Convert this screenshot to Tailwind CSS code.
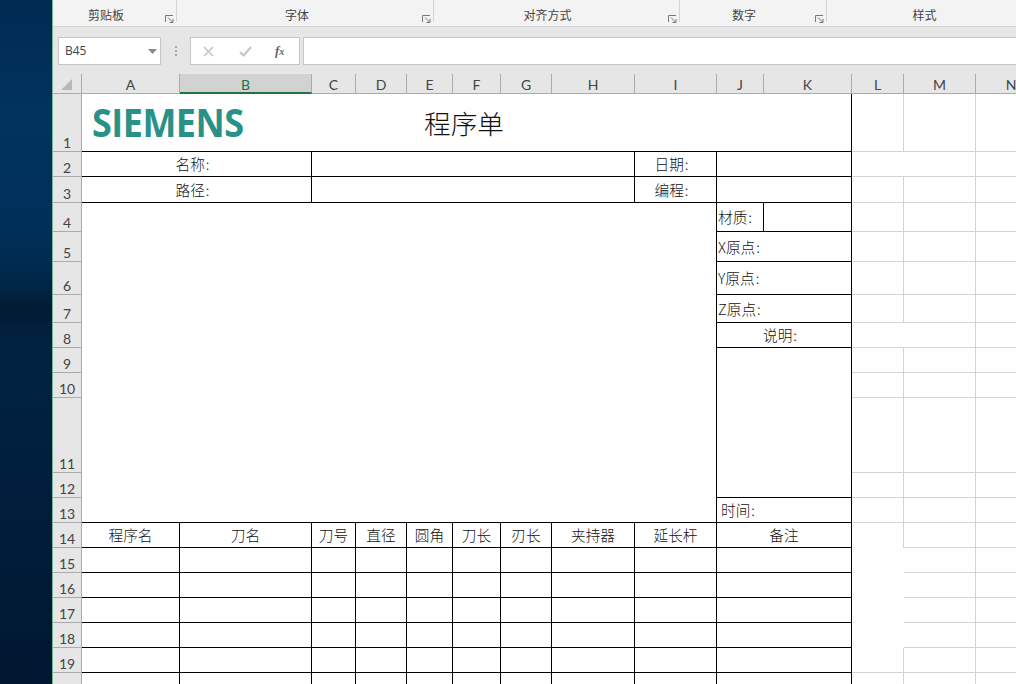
<!DOCTYPE html>
<html lang="zh-CN">
<head>
  <meta charset="UTF-8" />
  <title>程序单</title>
  <script src="https://cdn.jsdelivr.net/npm/@tailwindcss/browser@4"></script>
</head>
<body class="overflow-hidden bg-white">
<div class="flex h-[684px] w-[1016px] overflow-hidden">

  <!-- desktop wallpaper showing behind the window -->
  <div class="w-[53px] shrink-0 border-r border-[#6db595] bg-[linear-gradient(180deg,#002a52_0px,#00335f_110px,#002f5a_230px,#012747_285px,#021a33_310px,#012342_345px,#001f3f_450px,#001a36_600px,#001730_684px)]"></div>

  <div class="flex min-w-0 flex-1 flex-col bg-[#e6e6e6]">
    <!-- ribbon group labels -->
    <div class="flex h-[27px] shrink-0 border-b border-[#d4d4d4] bg-[#f3f3f3] pb-[4px] font-['Noto_Sans_CJK_SC',sans-serif] text-[12px] leading-[17px] text-[#444]">
      <div class="flex w-[124px] border-r border-[#d4d4d4] pt-[6px]">
        <span class="flex-1 pr-[6px] text-center">剪贴板</span>
        <svg class="mr-[2px] mt-[9px] h-[8px] w-[9px]" viewBox="0 0 9 8" fill="none" stroke="#777"><path d="M0.5 7V0.5H8" /><path d="M3 2.5L7.5 7M8 4V7.5H4.5" /></svg>
      </div>
      <div class="flex w-[257px] border-r border-[#d4d4d4] pt-[6px]">
        <span class="flex-1 pr-[5px] text-center">字体</span>
        <svg class="mr-[2px] mt-[9px] h-[8px] w-[9px]" viewBox="0 0 9 8" fill="none" stroke="#777"><path d="M0.5 7V0.5H8" /><path d="M3 2.5L7.5 7M8 4V7.5H4.5" /></svg>
      </div>
      <div class="flex w-[246px] border-r border-[#d4d4d4] pt-[6px]">
        <span class="flex-1 pr-[7px] text-center">对齐方式</span>
        <svg class="mr-[2px] mt-[9px] h-[8px] w-[9px]" viewBox="0 0 9 8" fill="none" stroke="#777"><path d="M0.5 7V0.5H8" /><path d="M3 2.5L7.5 7M8 4V7.5H4.5" /></svg>
      </div>
      <div class="flex w-[147px] border-r border-[#d4d4d4] pt-[6px]">
        <span class="flex-1 pr-[7px] text-center">数字</span>
        <svg class="mr-[2px] mt-[9px] h-[8px] w-[9px]" viewBox="0 0 9 8" fill="none" stroke="#777"><path d="M0.5 7V0.5H8" /><path d="M3 2.5L7.5 7M8 4V7.5H4.5" /></svg>
      </div>
      <div class="flex-1 pl-[6px] pt-[6px] text-center">样式</div>
    </div>

    <!-- formula bar -->
    <div class="flex h-[38px] shrink-0 items-start pt-[10px]">
      <div class="ml-[5px] flex h-[28px] w-[103px] items-center justify-between border border-[#c6c6c6] bg-white pl-[6px] pr-[3px] font-['Open_Sans',sans-serif] text-[12px] text-[#444]">
        <span>B45</span>
        <svg class="h-[5px] w-[9px]" viewBox="0 0 9 5" fill="#8a8a8a"><path d="M0 0H9L4.5 5Z" /></svg>
      </div>
      <div class="flex h-[28px] w-[29px] flex-col items-center justify-center gap-[2px]">
        <span class="h-[2px] w-[2px] bg-[#a8a8a8]"></span>
        <span class="h-[2px] w-[2px] bg-[#a8a8a8]"></span>
        <span class="h-[2px] w-[2px] bg-[#a8a8a8]"></span>
      </div>
      <div class="flex h-[28px] w-[110px] items-center border border-[#c6c6c6] bg-white">
        <svg class="ml-[12px] h-[11px] w-[11px]" viewBox="0 0 11 11" fill="none" stroke="#c4c4c4" stroke-width="1.6"><path d="M1 1L10 10M10 1L1 10" /></svg>
        <svg class="ml-[25px] h-[11px] w-[13px]" viewBox="0 0 13 11" fill="none" stroke="#c4c4c4" stroke-width="2"><path d="M1 6L4.5 9.5L12 1" /></svg>
        <span class="ml-[23px] font-['Liberation_Serif',serif] text-[13px] font-bold italic text-[#666]">f<span class="text-[10px]">x</span></span>
      </div>
      <div class="ml-[3px] h-[28px] flex-1 border-y border-l border-[#c6c6c6] bg-white"></div>
    </div>

    <!-- sheet: row headers, column headers and cells share one grid -->
    <div id="sheet" class="mt-[9px] grid flex-1 grid-cols-[29px_98px_132px_44px_51px_46px_48px_51px_83px_82px_47px_88px_52px_72px_71px] grid-rows-[20px_58px_25px_26px_29px_30px_33px_28px_25px_25px_25px_75px_25px_25px_25px_25px_25px_25px_25px_25px_25px] overflow-hidden font-['Noto_Sans_CJK_SC',sans-serif] text-[14.67px] font-light text-[#111]">
      <!-- column headers -->
      <div class="flex items-center justify-center border-r border-b border-[#ababab]">
        <svg class="ml-[-1px] mt-[1px] h-[11px] w-[11px]" viewBox="0 0 11 11" fill="#b8b8b8"><path d="M11 0V11H0Z" /></svg>
      </div>
      <div class="border-r border-b border-[#ababab] text-center font-['Lato',sans-serif] text-[14px] font-normal leading-[21px] text-[#444]">A</div>
      <div class="border-r border-b-2 border-r-[#ababab] border-b-[#217346] bg-[#d2d2d2] text-center font-['Lato',sans-serif] text-[14px] font-normal leading-[21px] text-[#217346]">B</div>
      <div class="border-r border-b border-[#ababab] text-center font-['Lato',sans-serif] text-[14px] font-normal leading-[21px] text-[#444]">C</div>
      <div class="border-r border-b border-[#ababab] text-center font-['Lato',sans-serif] text-[14px] font-normal leading-[21px] text-[#444]">D</div>
      <div class="border-r border-b border-[#ababab] text-center font-['Lato',sans-serif] text-[14px] font-normal leading-[21px] text-[#444]">E</div>
      <div class="border-r border-b border-[#ababab] text-center font-['Lato',sans-serif] text-[14px] font-normal leading-[21px] text-[#444]">F</div>
      <div class="border-r border-b border-[#ababab] text-center font-['Lato',sans-serif] text-[14px] font-normal leading-[21px] text-[#444]">G</div>
      <div class="border-r border-b border-[#ababab] text-center font-['Lato',sans-serif] text-[14px] font-normal leading-[21px] text-[#444]">H</div>
      <div class="border-r border-b border-[#ababab] text-center font-['Lato',sans-serif] text-[14px] font-normal leading-[21px] text-[#444]">I</div>
      <div class="border-r border-b border-[#ababab] text-center font-['Lato',sans-serif] text-[14px] font-normal leading-[21px] text-[#444]">J</div>
      <div class="border-r border-b border-[#ababab] text-center font-['Lato',sans-serif] text-[14px] font-normal leading-[21px] text-[#444]">K</div>
      <div class="border-r border-b border-[#ababab] text-center font-['Lato',sans-serif] text-[14px] font-normal leading-[21px] text-[#444]">L</div>
      <div class="border-r border-b border-[#ababab] text-center font-['Lato',sans-serif] text-[14px] font-normal leading-[21px] text-[#444]">M</div>
      <div class="border-r border-b border-[#ababab] text-center font-['Lato',sans-serif] text-[14px] font-normal leading-[21px] text-[#444]">N</div>
    </div>
  </div>
</div>

<script>
  const sheet = document.getElementById('sheet');

  const black = 'bg-white border-r border-b border-black';
  const gray = 'bg-white border-r border-b border-[#d4d4d4]';
  const center = ' flex items-center justify-center';
  const left = ' flex items-center';

  function cell(cls, text) {
    const d = document.createElement('div');
    d.className = cls;
    if (text) d.textContent = text;
    sheet.appendChild(d);
    return d;
  }

  // label whose colon sits a little apart, as in the sheet's font
  function label(cls, text) {
    const d = cell(cls);
    const s = document.createElement('span');
    s.textContent = text;
    const c = document.createElement('span');
    c.className = 'ml-[1px]';
    c.textContent = ':';
    d.append(s, c);
    return d;
  }

  function rowHead(n) {
    cell('flex items-end justify-center border-r border-b border-[#ababab] font-[\'Lato\',sans-serif] text-[14px] font-normal leading-[16px] text-[#444]', n < 20 ? String(n) : '');
  }

  // L, M, N on the top rows; merged = L:M joined
  function grayCells(merged) {
    if (merged) {
      cell(gray + ' col-span-2');
    } else {
      cell(gray);
      cell(gray);
    }
    cell(gray);
  }

  // row 1
  rowHead(1);
  const title = cell(black + ' relative col-span-11 flex items-center justify-center pr-[5px] text-[26.67px]', '程序单');
  const logo = document.createElement('span');
  logo.className = "absolute left-[10px] top-[7px] origin-top scale-y-[1.1] font-['Open_Sans',sans-serif] text-[36px] leading-[40px] font-bold tracking-[-0.5px] text-[#2a9189]";
  logo.textContent = 'SIEMENS';
  title.appendChild(logo);
  grayCells(false);

  // rows 2, 3
  rowHead(2);
  label(black + center + ' col-span-2 pr-[8px]', '名称');
  cell(black + ' col-span-6');
  label(black + center + ' pr-[8px]', '日期');
  cell(black + ' col-span-2');
  grayCells(true);

  rowHead(3);
  label(black + center + ' col-span-2 pr-[8px]', '路径');
  cell(black + ' col-span-6');
  label(black + center + ' pr-[8px]', '编程');
  cell(black + ' col-span-2');
  grayCells(false);

  // rows 4-13: big drawing area on the left, notes column on the right
  rowHead(4);
  cell(black + ' col-span-9 row-span-10');
  label(black + left + ' pl-[1px]', '材质');
  cell(black);
  grayCells(false);

  rowHead(5);
  label(black + left + ' col-span-2 pl-[1px]', 'X原点');
  grayCells(false);

  rowHead(6);
  label(black + left + ' col-span-2 pl-[1px]', 'Y原点');
  grayCells(false);

  rowHead(7);
  label(black + left + ' col-span-2 pl-[1px]', 'Z原点');
  grayCells(false);

  rowHead(8);
  label(black + center + ' col-span-2 pr-[8px]', '说明');
  grayCells(true);

  rowHead(9);
  cell(black + ' col-span-2 row-span-4');
  grayCells(false);
  [10, 11, 12].forEach(n => {
    rowHead(n);
    grayCells(false);
  });

  rowHead(13);
  label(black + left + ' col-span-2 pl-[4px]', '时间');
  grayCells(false);

  // rows 14-20: tool table
  const toolHead = ['程序名', '刀名', '刀号', '直径', '圆角', '刀长', '刃长', '夹持器', '延长杆'];
  for (let n = 14; n <= 20; n++) {
    rowHead(n);
    for (let i = 0; i < 9; i++) {
      cell(black + center, n === 14 ? toolHead[i] : '');
    }
    cell(black + center + ' col-span-2', n === 14 ? '备注' : '');

    if (n === 14) {
      cell('bg-white border-r border-[#d4d4d4]');
    } else if (n <= 18) {
      cell('bg-white');
    } else {
      cell(gray);
    }
    cell(gray);
    cell(gray);
  }
</script>
</body>
</html>
